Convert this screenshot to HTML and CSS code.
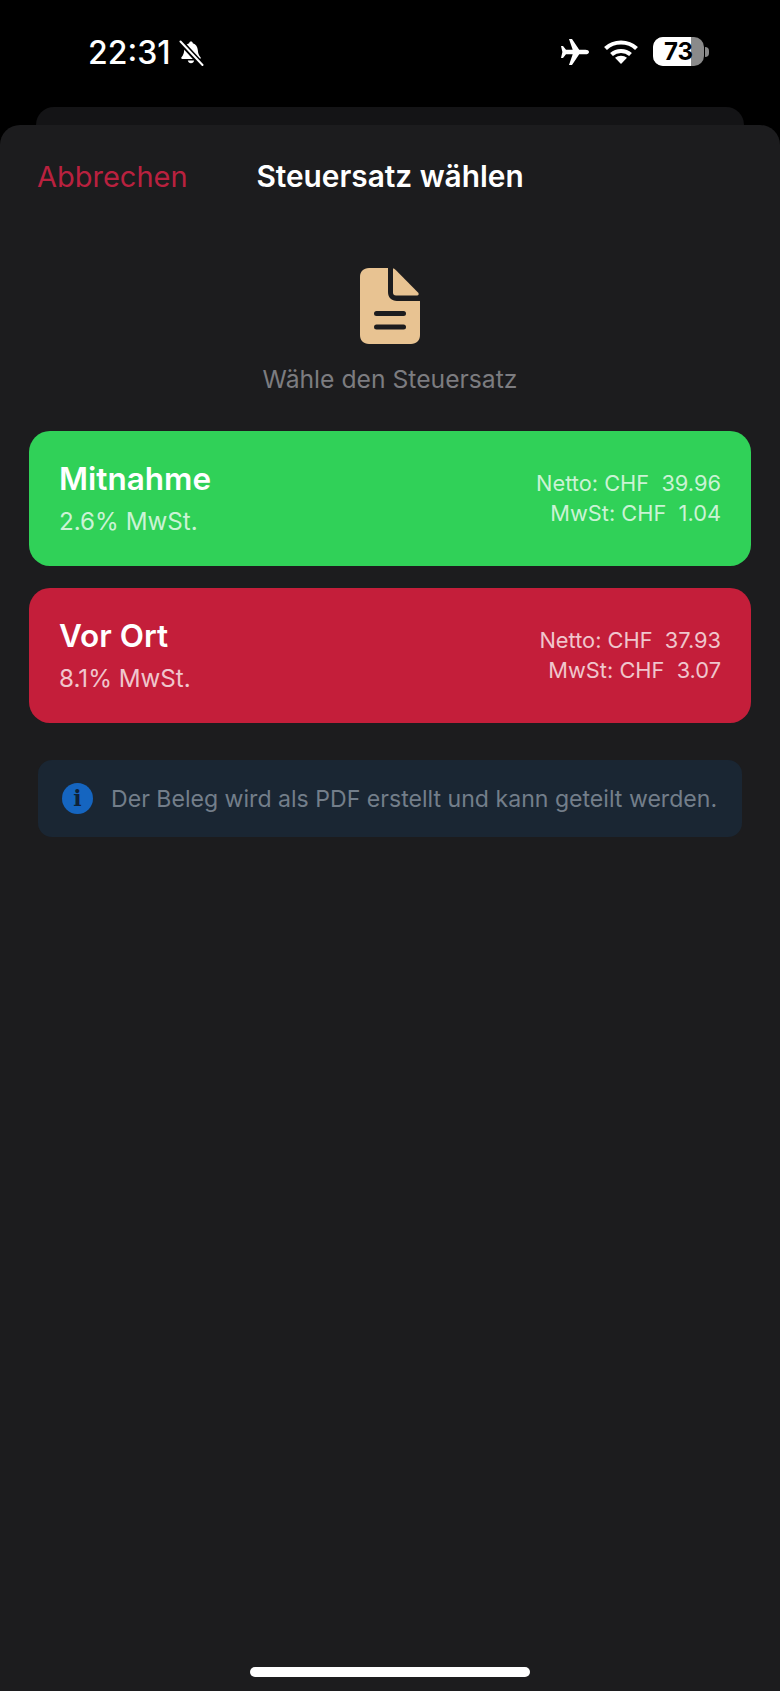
FILE: index.html
```html
<!DOCTYPE html>
<html lang="de">
<head>
  <meta charset="UTF-8" />
  <meta name="viewport" content="width=device-width, initial-scale=1" />
  <title>Steuersatz wählen</title>
  <link rel="stylesheet" href="styles.css">
</head>
<body>

  <!-- Status bar -->
  <header class="status">
    <div class="status-left">
      <span class="time">22:31</span>
      <svg class="bell" viewBox="0 0 26 26" width="26" height="26">
        <path fill="#fff" d="M13 1.500c-1 0-1.700.7-1.800 1.700C8 4 6.500 6.600 6.200 10c-.2 3-.9 5.500-2.700 7.300-.6.7-.2 1.700.8 1.700h17.400c1 0 1.400-1 .8-1.700C20.700 15.500 20 13 19.800 10c-.3-3.400-1.800-6-5-6.800-.1-1-.8-1.700-1.800-1.700z"/>
        <path fill="#fff" d="M9.800 20.500h6.400c-.3 1.600-1.600 2.700-3.200 2.700s-2.900-1.100-3.200-2.700z"/>
        <path stroke="#000" stroke-width="5.500" d="M1 0l24 26"/>
        <path stroke="#fff" stroke-width="2" stroke-linecap="round" d="M2.500 1.500l22 23.500"/>
      </svg>
    </div>
    <div class="status-right">
      <svg class="plane" viewBox="0 0 30 28" width="30" height="28">
        <path fill="#fff" d="M30 14c0-1.400-1.700-2.300-3.500-2.300h-6.300L13 1h-3l3.700 10.700H7L4 8H2l1.400 6L2 20h2l3-3.700h6.700L10 27h3l7.200-10.700h6.300c1.800 0 3.500-.9 3.500-2.300z"/>
      </svg>
      <svg class="wifi" viewBox="0 0 36 26" width="36" height="26">
        <path fill="none" stroke="#fff" stroke-width="4.200" d="M2.500 9.500C11 1.500 25 1.500 33.500 9.500"/>
        <path fill="none" stroke="#fff" stroke-width="4.200" d="M8.500 15.500c5.300-4.700 13.700-4.700 19 0"/>
        <path fill="#fff" d="M18 25l-6-6.200c3.400-2.800 8.600-2.800 12 0z"/>
      </svg>
      <div class="battery">
        <div class="battery-body"><span class="battery-fill"></span><span class="battery-num">73</span></div>
        <span class="battery-cap"></span>
      </div>
    </div>
  </header>

  <div class="back-card"></div>

  <!-- Sheet -->
  <main class="sheet">
    <div class="nav">
      <a class="cancel">Abbrechen</a>
      <h1>Steuersatz wählen</h1>
    </div>

    <div class="intro">
      <svg class="doc" viewBox="0 0 60 76" width="60" height="76">
        <path fill="#e8c392" d="M9 0h19v24c0 5.500 3.500 9 9 9h23v34c0 5.500-3.500 9-9 9H9c-5.500 0-9-3.500-9-9V9C0 3.500 3.500 0 9 0z"/>
        <path fill="#e8c392" d="M33 0.500c1 0 1.500.3 2.500 1.300L58 24.500c1.200 1.300.8 3-1 3H36c-2 0-3-1-3-3z"/>
        <rect x="14" y="43" width="32" height="5" rx="2.500" fill="#1c1c1e"/>
        <rect x="14" y="56.500" width="32" height="5" rx="2.500" fill="#1c1c1e"/>
      </svg>
      <p>Wähle den Steuersatz</p>
    </div>

    <div class="options">
      <button class="option green">
        <div class="option-left">
          <strong>Mitnahme</strong>
          <span>2.6% MwSt.</span>
        </div>
        <div class="option-right">
          <span>Netto: CHF&nbsp; 39.96</span>
          <span>MwSt: CHF&nbsp; 1.04</span>
        </div>
      </button>
      <button class="option red">
        <div class="option-left">
          <strong>Vor Ort</strong>
          <span>8.1% MwSt.</span>
        </div>
        <div class="option-right">
          <span>Netto: CHF&nbsp; 37.93</span>
          <span>MwSt: CHF&nbsp; 3.07</span>
        </div>
      </button>
    </div>

    <div class="info">
      <span class="info-icon">i</span>
      <span>Der Beleg wird als PDF erstellt und kann geteilt werden.</span>
    </div>

    <div class="home-bar"></div>
  </main>

</body>
</html>
```

FILE: styles.css
```css
* {
  margin: 0;
  padding: 0;
  box-sizing: border-box;
}
html,
body {
  height: 100%;
}
body {
  font-family: 'Inter', 'Liberation Sans', sans-serif;
  background-color: #000;
  color: white;
  display: flex;
  flex-direction: column;
  -webkit-font-smoothing: antialiased;
}

/* Status bar */
.status {
  height: 107px;
  flex: none;
  display: flex;
  justify-content: space-between;
  align-items: flex-start;
  padding: 37px 71px 0 88px;
}
.status-left,
.status-right {
  display: flex;
  align-items: center;
}
.time {
  font-size: 32px;
  font-weight: 500;
  line-height: 32px;
}
.bell {
  margin-left: 8px;
}
.plane {
  margin-right: 14px;
}
.wifi {
  margin-right: 14px;
}
.battery {
  display: flex;
  align-items: center;
}
.battery-body {
  position: relative;
  width: 51px;
  height: 29px;
  border-radius: 10px;
  background: #8a8a8a;
  overflow: hidden;
  display: flex;
  align-items: center;
  justify-content: center;
}
.battery-fill {
  position: absolute;
  left: 0;
  top: 0;
  bottom: 0;
  width: 74%;
  background: #fff;
}
.battery-num {
  position: relative;
  color: #000;
  font-size: 24px;
  font-weight: 700;
}
.battery-cap {
  width: 4px;
  height: 10px;
  margin-left: 1px;
  border-radius: 0 4px 4px 0;
  background: #8a8a8a;
}

.back-card {
  flex: none;
  height: 18px;
  margin: 0 36px;
  background: #141416;
  border-radius: 18px 18px 0 0;
}

/* Sheet */
.sheet {
  flex: 1;
  position: relative;
  background: #1c1c1e;
  border-radius: 20px 20px 0 0;
  padding: 0 29px 0;
}
.nav {
  position: relative;
  height: 96px;
  display: flex;
  align-items: center;
  justify-content: center;
}
.cancel {
  position: absolute;
  left: 8px;
  top: 34px;
  color: #b9213f;
  font-size: 29px;
  line-height: 36px;
}
.nav h1 {
  font-size: 29.8px;
  font-weight: 600;
  line-height: 36px;
  margin-top: 6px;
}
.intro {
  display: flex;
  flex-direction: column;
  align-items: center;
  padding-top: 47px;
}
.doc {
  display: block;
}
.intro p {
  margin-top: 20px;
  color: #7c7c80;
  font-size: 24.7px;
  line-height: 30px;
}
.options {
  margin-top: 37px;
  display: flex;
  flex-direction: column;
  gap: 22px;
}
.option {
  height: 135px;
  border: none;
  border-radius: 21px;
  padding: 0 30px;
  color: white;
  font-family: inherit;
  display: flex;
  justify-content: space-between;
  align-items: center;
  text-align: left;
}
.option.green {
  background: #30d158;
}
.option.red {
  background: #c41e3a;
}
.option-left {
  display: flex;
  flex-direction: column;
}
.option-left strong {
  font-size: 31.5px;
  font-weight: 600;
  line-height: 36px;
}
.option-left span {
  margin-top: 10px;
  font-size: 24.2px;
  line-height: 30px;
  color: rgba(255, 255, 255, 0.75);
}
.option-right {
  display: flex;
  flex-direction: column;
  align-items: flex-end;
  font-size: 21.8px;
  line-height: 30px;
  color: rgba(255, 255, 255, 0.75);
  margin-top: -2px;
}
.info {
  margin: 37px 9px 0;
  height: 77px;
  border-radius: 14px;
  background: #1a2633;
  color: #737e8a;
  font-size: 23.1px;
  display: flex;
  align-items: center;
  gap: 18px;
  padding: 0 24px;
}
.info-icon {
  width: 31px;
  height: 31px;
  flex: none;
  border-radius: 50%;
  background: #1565c0;
  color: #0e2238;
  font-family: 'DejaVu Serif', serif;
  font-size: 22px;
  font-weight: 700;
  line-height: 31px;
  text-align: center;
}
.home-bar {
  position: absolute;
  left: 250px;
  bottom: 14px;
  width: 280px;
  height: 10px;
  border-radius: 5px;
  background: #fff;
}
```
